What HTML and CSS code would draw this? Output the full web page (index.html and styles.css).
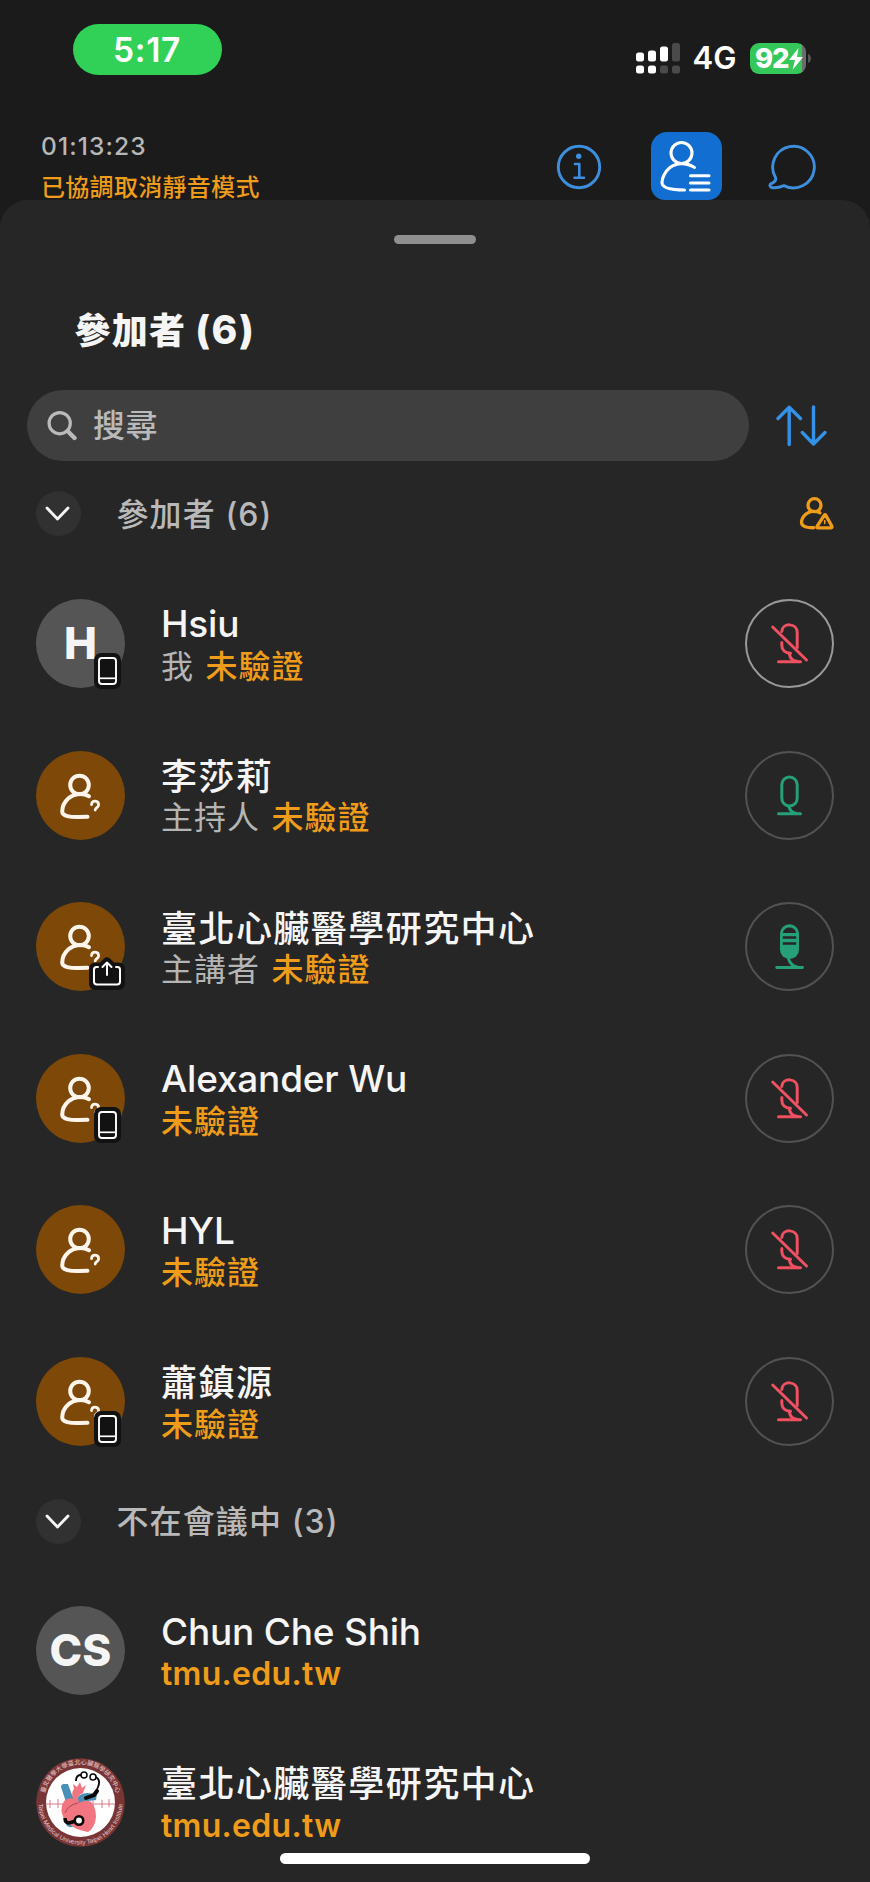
FILE: index.html
```html
<!DOCTYPE html>
<html lang="zh-Hant">
<head>
<meta charset="utf-8">
<title>參加者</title>
<link rel="stylesheet" href="styles.css">
</head>
<body>
<svg class="defs" aria-hidden="true">
  <symbol id="guest" viewBox="0 0 89 89">
    <g fill="none" stroke="#fdf5ec" stroke-width="4" stroke-linecap="round">
      <circle cx="43.5" cy="34" r="9.3"/>
      <path d="M53 45.2C47 41.8 38 42.4 32.5 47.2C28.500 50.700 26.200 56.500 26.200 60.500C26.200 65 34 66.300 43 66.100L51.500 65.800"/>
      <path d="M55.500 53.600C55.800 48.800 62.800 49 62.600 54C62.500 56.800 59.300 56.200 59.200 59" stroke-width="2.800"/>
    </g>
  </symbol>
  <symbol id="phone" viewBox="0 0 27 36">
    <rect width="27" height="36" rx="7" fill="#121212"/>
    <rect x="5" y="5" width="17" height="26" rx="3" fill="none" stroke="#fff" stroke-width="1.900"/>
    <path d="M5 25.300H22" stroke="#fff" stroke-width="1.700"/>
  </symbol>
  <symbol id="share" viewBox="0 0 36 33">
    <path d="M7 5.500H11L15 1.500Q18 -.8 21 1.500L25 5.500H29Q36 5.500 36 12V26Q36 33 29 33H7Q0 33 0 26V12Q0 5.500 7 5.500Z" fill="#121212"/>
    <g fill="none" stroke="#fff" stroke-width="2" stroke-linecap="round" stroke-linejoin="round">
      <path d="M9 10H7.500Q5 10 5 12.500V24.500Q5 27.500 8 27.500H28Q31 27.500 31 24.500V12.500Q31 10 28.500 10H27"/>
      <path d="M18 18V5.500M13.500 10L18 5.500L22.500 10"/>
    </g>
  </symbol>
  <symbol id="muted" viewBox="0 0 89 89">
    <g fill="none" stroke="#ef5062" stroke-width="3" stroke-linecap="round">
      <path d="M27.700 28L61.500 61"/>
      <path d="M36.800 32.500C37.200 23.500 52.200 23.500 52.200 33.500V48.500"/>
      <path d="M36.800 43.500V46C36.800 51 40 54.200 45.500 54.200"/>
      <path d="M44.200 54.500Q45.500 62 52 62.300"/>
      <path d="M33.500 62.700H55.500"/>
    </g>
  </symbol>
  <symbol id="mic" viewBox="0 0 89 89">
    <g fill="none" stroke="#25a079" stroke-width="3" stroke-linecap="round">
      <rect x="36.800" y="26" width="15.400" height="29" rx="7.700"/>
      <path d="M43.800 55.500Q45.500 61.800 51.500 62.500M33.500 62.700H55.500"/>
    </g>
  </symbol>
  <symbol id="speaking" viewBox="0 0 89 89">
    <rect x="35" y="22.300" width="19" height="34.700" rx="9.500" fill="#25a079"/>
    <path d="M37.800 31Q39 25.500 44.500 25.500Q50 25.500 51.200 31ZM37.800 34.200H51.200V36.700H37.800ZM37.800 40.200H51.200V42.800H37.800Z" fill="#262626"/>
    <path d="M43.500 57Q46 64 52 65M31.700 65.500H57.500" fill="none" stroke="#25a079" stroke-width="2.900" stroke-linecap="round"/>
  </symbol>
  <symbol id="chevron" viewBox="0 0 45 45">
    <path d="M11 17L21.500 28L32 17" fill="none" stroke="#f4f4f4" stroke-width="2.900" stroke-linecap="round" stroke-linejoin="round"/>
  </symbol>
</svg>

<header class="top">
  <div class="status">
    <div class="clock">5:17</div>
    <div class="status-right">
      <svg class="signal" width="44" height="31" viewBox="0 0 44 31">
        <g fill="#fff"><rect y="9.500" width="8" height="9" rx="2.500"/><rect x="12" y="7.500" width="8" height="11" rx="2.500"/><rect x="24" y="3.500" width="8" height="15" rx="2.500"/><rect y="22.500" width="8" height="8" rx="2.500"/><rect x="12" y="22.500" width="8" height="8" rx="2.500"/></g>
        <g fill="#4a4a4a"><rect x="36" width="8" height="18.500" rx="2.500"/><rect x="24" y="22.500" width="8" height="8" rx="2.500"/><rect x="36" y="22.500" width="8" height="8" rx="2.500"/></g>
      </svg>
      <span class="network">4G</span>
      <div class="battery">
        <span class="level">92</span>
        <svg class="bolt" width="14" height="22" viewBox="0 0 14 22"><path d="M9.500 0L0 12H6L3.500 22L14 9H8Z" fill="#fff"/></svg>
      </div>
      <svg class="cap" width="3" height="9" viewBox="0 0 3 9"><path d="M0 0Q3 1 3 4.500Q3 8 0 9Z" fill="#555"/></svg>
    </div>
  </div>
  <div class="meeting">
    <div class="meeting-text">
      <div class="timer">01:13:23</div>
      <div class="mode">已協調取消靜音模式</div>
    </div>
    <div class="actions">
      <svg width="46" height="46" viewBox="0 0 46 46" fill="none" stroke="#3d8fdd" stroke-width="2.900" stroke-linecap="round" stroke-linejoin="round"><circle cx="23" cy="23" r="20.700"/><circle cx="22.700" cy="12.300" r="2.700" fill="#3d8fdd" stroke="none"/><path d="M19 20H23.300V33.500M18.500 33.700H28" stroke-width="2.600"/></svg>
      <div class="roster">
        <svg width="71" height="71" viewBox="0 0 71 71" fill="none" stroke="#fff" stroke-width="3.100" stroke-linecap="round"><circle cx="30.500" cy="21" r="10.500"/><path d="M43.500 35.500C35 30.300 25.500 30.500 19 35.500C14 39.500 11 46 11 50.500C11 56 20 58 33.500 58"/><path d="M39.500 43.800H58M39.500 51H58M39.500 58H58"/></svg>
      </div>
      <svg width="48" height="48" viewBox="0 0 48 48" fill="none" stroke="#3d8fdd" stroke-width="2.900" stroke-linejoin="round"><path d="M16 43.300A20.800 20.800 0 1 0 7.500 35.200C8.500 37.500 7 39.500 3.200 41.300C1 42.500 2 45.200 4.500 45.400C8.500 45.800 12 45 16 43.300Z" transform="translate(0 -.7)"/></svg>
    </div>
  </div>
</header>

<main class="sheet">
  <div class="handle"></div>
  <h1 class="title">參加者 <span class="count">(6)</span></h1>
  <div class="tools">
    <div class="search">
      <svg width="30" height="30" viewBox="0 0 30 30" fill="none" stroke="#bababa" stroke-linecap="round"><circle cx="12.700" cy="12.200" r="10.600" stroke-width="3.200"/><path d="M20.800 20.300L27.500 27" stroke-width="4.400"/></svg>
      <span>搜尋</span>
    </div>
    <svg class="sort" width="51" height="42" viewBox="0 0 51 42" fill="none" stroke="#3491e8" stroke-width="3.400" stroke-linecap="round" stroke-linejoin="round"><path d="M13.200 39.500V2.300M2 13.500L13.200 2.300L24.500 13.500M37.500 2V39M26.300 27.500L37.500 39L49 27.500"/></svg>
  </div>

  <section>
    <div class="group">
      <span class="toggle"><svg><use href="#chevron"/></svg></span>
      <h2>參加者 (6)</h2>
      <svg class="alert" width="35" height="34" viewBox="0 0 35 34" fill="none" stroke="#ee9c19" stroke-width="3.300" stroke-linecap="round" stroke-linejoin="round"><circle cx="15.500" cy="8.200" r="6.500"/><path d="M21 15.800C16.500 13.700 10.500 13.900 7 17C4 19.500 2.500 22.800 2.500 25.500C2.500 29.500 8.500 31 15 30.700"/><path d="M25.300 18.200Q26 17 26.700 18.200L32.800 29Q33.500 30.800 32 30.800H19Q17.500 30.800 18.300 29Z"/><path d="M25.700 23.500V26.500" stroke-width="1.600"/></svg>
    </div>
    <div class="row">
      <div class="avatar initials"><span>H</span><svg class="badge-phone"><use href="#phone"/></svg></div>
      <div class="who"><div class="name">Hsiu</div><div class="sub"><span class="role">我</span><span>未驗證</span></div></div>
      <div class="mic mine"><svg><use href="#muted"/></svg></div>
    </div>
    <div class="row">
      <div class="avatar guest"><svg><use href="#guest"/></svg></div>
      <div class="who"><div class="name cjk">李莎莉</div><div class="sub"><span class="role">主持人</span><span>未驗證</span></div></div>
      <div class="mic"><svg><use href="#mic"/></svg></div>
    </div>
    <div class="row">
      <div class="avatar guest"><svg><use href="#guest"/></svg><svg class="badge-share"><use href="#share"/></svg></div>
      <div class="who"><div class="name cjk">臺北心臟醫學研究中心</div><div class="sub"><span class="role">主講者</span><span>未驗證</span></div></div>
      <div class="mic"><svg><use href="#speaking"/></svg></div>
    </div>
    <div class="row">
      <div class="avatar guest"><svg><use href="#guest"/></svg><svg class="badge-phone"><use href="#phone"/></svg></div>
      <div class="who"><div class="name">Alexander Wu</div><div class="sub"><span>未驗證</span></div></div>
      <div class="mic"><svg><use href="#muted"/></svg></div>
    </div>
    <div class="row">
      <div class="avatar guest"><svg><use href="#guest"/></svg></div>
      <div class="who"><div class="name">HYL</div><div class="sub"><span>未驗證</span></div></div>
      <div class="mic"><svg><use href="#muted"/></svg></div>
    </div>
    <div class="row">
      <div class="avatar guest"><svg><use href="#guest"/></svg><svg class="badge-phone"><use href="#phone"/></svg></div>
      <div class="who"><div class="name cjk">蕭鎮源</div><div class="sub"><span>未驗證</span></div></div>
      <div class="mic"><svg><use href="#muted"/></svg></div>
    </div>
  </section>

  <section>
    <div class="group">
      <span class="toggle"><svg><use href="#chevron"/></svg></span>
      <h2>不在會議中 (3)</h2>
    </div>
    <div class="row">
      <div class="avatar initials"><span>CS</span></div>
      <div class="who"><div class="name">Chun Che Shih</div><div class="sub domain"><span>tmu.edu.tw</span></div></div>
    </div>
    <div class="row">
      <div class="avatar">
        <svg viewBox="0 0 89 89">
          <defs>
            <path id="arc-top" d="M9.700 53A36.300 36.300 0 1 1 79.300 53"/>
            <path id="arc-bottom" d="M3 38A42 42 0 1 0 86 38"/>
          </defs>
          <circle cx="44.500" cy="44.500" r="44.300" fill="#793536"/>
          <circle cx="44.500" cy="44.500" r="34.500" fill="#fff"/>
          <text class="seal-zh" text-anchor="middle"><textPath href="#arc-top" startOffset="50%">臺北醫學大學臺北心臟醫學研究中心</textPath></text>
          <text class="seal-en" text-anchor="middle"><textPath href="#arc-bottom" startOffset="50%">Taipei Medical University Taipei Heart Institute</textPath></text>
          <path d="M10 46H79M14 42V50M22 41V50M57 41V50M66 42V50M73 41V49" fill="none" stroke="#d77c88" stroke-width="1"/>
          <path d="M25 29Q25 26 28 26L32 26L36 37L40 42L30 44ZM40 45Q41 35 51 35L61 36L60 42L52 43L46 48Z" fill="#4a8fb5"/>
          <path d="M30 67Q36 72 38 66L34 60Z" fill="#4a8fb5"/>
          <path d="M28 43Q33 39 37 41Q35 34 38 31L37 26L41 29L44 24L46 30L50 27L47 35Q40 37 43 45Q50 41 55 44Q60 49 60 59Q59 70 52 74Q37 72 28 61Q23 51 28 43Z" fill="#f27582"/>
          <path d="M29 55Q32 47 42 45" fill="none" stroke="#8f3b48" stroke-width=".8"/>
          <g fill="none" stroke="#080808"><path d="M40 23Q40 17 45 17M60 19Q65 22 62 29L59 36" stroke-width="1.800"/><path d="M61 33L58 37L50 40" stroke-width="4" stroke-linecap="round"/><circle cx="48" cy="17" r="3" fill="#fff" stroke-width="1.500"/><circle cx="57" cy="19" r="3" fill="#fff" stroke-width="1.500"/><path d="M29 60Q29 65 33 65L40 63" stroke-width="3.500"/><circle cx="43" cy="62.500" r="4.200" fill="#fff" stroke-width="2.600"/></g>
        </svg>
      </div>
      <div class="who"><div class="name cjk">臺北心臟醫學研究中心</div><div class="sub domain"><span>tmu.edu.tw</span></div></div>
    </div>
  </section>
</main>
<div class="home-indicator"></div>
</body>
</html>
```
FILE: styles.css
```css
* { box-sizing: border-box; }
body {
  margin: 0;
  width: 870px;
  height: 1882px;
  overflow: hidden;
  background: #1b1b1b;
  color: #f5f5f5;
  font-family: Inter, "Noto Sans CJK TC", sans-serif;
}
svg { display: block; flex: none; }
.defs { position: absolute; width: 0; height: 0; }

.top { height: 200px; }
.status {
  display: flex;
  justify-content: space-between;
  padding: 24px 59px 0 73px;
  height: 131.500px;
}
.clock {
  width: 149px;
  height: 51px;
  padding-right: 1px;
  border-radius: 26px;
  background: #31d158;
  color: #fff;
  font-size: 33.500px;
  font-weight: 600;
  line-height: 52px;
  letter-spacing: .7px;
  text-align: center;
}
.status-right { display: flex; align-items: center; height: 31px; margin-top: 18.500px; }
.network {
  width: 44px;
  margin-left: 12.500px;
  margin-right: 13.500px;
  font-size: 31px;
  font-weight: 600;
  line-height: 32px;
  color: #fff;
  white-space: nowrap;
}
.battery {
  display: flex;
  align-items: center;
  width: 56px;
  height: 31px;
  padding-left: 5px;
  border-radius: 9px;
  background: linear-gradient(90deg, #34c759 52px, #6b6b6b 52px);
}
.level { font-size: 27.500px; font-weight: 800; line-height: 31px; width: 34px; letter-spacing: -1.200px; color: #fff; }
.bolt { margin-top: 2px; }
.cap { margin-left: 2px; }

.meeting { display: flex; justify-content: space-between; padding: 0 54px 0 41px; }
.timer { font-size: 24.500px; font-weight: 500; line-height: 28px; color: #b7b7b7; letter-spacing: 1.100px; }
.mode { margin-top: 11.500px; font-size: 24px; font-weight: 500; line-height: 34px; letter-spacing: .3px; color: #ee9c19; }
.actions { display: flex; align-items: center; height: 71px; }
.roster { height: 68.500px; margin: 0 46px 2.500px 49px; border-radius: 16px 16px 14px 14px; background: #126fd1; }

.sheet {
  height: 1682px;
  border-radius: 28px 28px 0 0;
  background: #262626;
  overflow: hidden;
}
.handle { width: 82px; height: 9px; margin: 35px auto 0; border-radius: 5px; background: #8f8f8f; }
.title { margin: 63px 0 0 74.500px; font-size: 36px; font-weight: 800; line-height: 48px; letter-spacing: 1.200px; }
.count { font-size: 39px; line-height: 1; letter-spacing: 1.500px; }
.tools { display: flex; align-items: center; margin: 35px 43px 0 27px; justify-content: space-between; }
.search {
  display: flex;
  align-items: center;
  gap: 16px;
  width: 721.500px;
  height: 71px;
  padding-left: 20px;
  border-radius: 36px;
  background: #3f3f3f;
  color: #bababa;
  font-size: 32px;
  font-weight: 500;
  line-height: 44px;
  letter-spacing: .5px;
}

.group { display: flex; align-items: center; height: 97.800px; padding: 0 36px 10px; }
section:first-of-type .group { margin-top: 9px; }
.toggle { width: 45px; height: 45px; border-radius: 50%; background: #313131; }
.toggle svg { width: 45px; height: 45px; }
.group h2 { margin: 1.500px 0 0 35.500px; font-size: 32px; font-weight: 500; line-height: 44px; letter-spacing: 1.100px; color: #b9b9b9; }
.alert { margin-left: auto; }

.row { display: flex; align-items: center; height: 151.600px; padding: 0 36px; }
.avatar { position: relative; width: 89px; height: 89px; border-radius: 50%; flex: none; }
.avatar > svg:first-child { width: 89px; height: 89px; }
.initials { background: #555; font-size: 44px; font-weight: 800; line-height: 89px; text-align: center; }
.guest { background: #7d4808; }
.avatar .badge-phone { position: absolute; left: 57.500px; top: 53.500px; width: 27px; height: 36px; }
.avatar .badge-share { position: absolute; left: 53px; top: 55px; width: 36px; height: 33px; }
.who { margin-left: 36px; padding-top: 4.500px; white-space: nowrap; }
.name { font-size: 37px; font-weight: 500; line-height: 41.500px; letter-spacing: -.2px; }
.name.cjk { margin-bottom: -3px; font-size: 36px; line-height: 44.500px; letter-spacing: 1.450px; }
.sub { display: flex; gap: 11.500px; margin-top: 1px; font-size: 32px; font-weight: 500; line-height: 42.500px; letter-spacing: 1px; color: #ee9c19; }
.role { color: #b5b5b5; font-weight: 400; }
.domain { font-weight: 600; letter-spacing: .3px; }
.mic { margin-left: auto; width: 89px; height: 89px; border: 2px solid #525252; border-radius: 50%; }
.mic svg { width: 89px; height: 89px; margin: -2px; }
.mine { border-color: #999; }

.seal-zh { font: 500 6.200px "Noto Sans CJK TC", sans-serif; fill: #dcb9b9; }
.seal-en { font: 400 6.300px "Liberation Sans", sans-serif; fill: #e2c4c4; }

.home-indicator {
  position: absolute;
  left: 280px;
  top: 1853px;
  width: 310px;
  height: 11px;
  border-radius: 6px;
  background: #fff;
}
```
